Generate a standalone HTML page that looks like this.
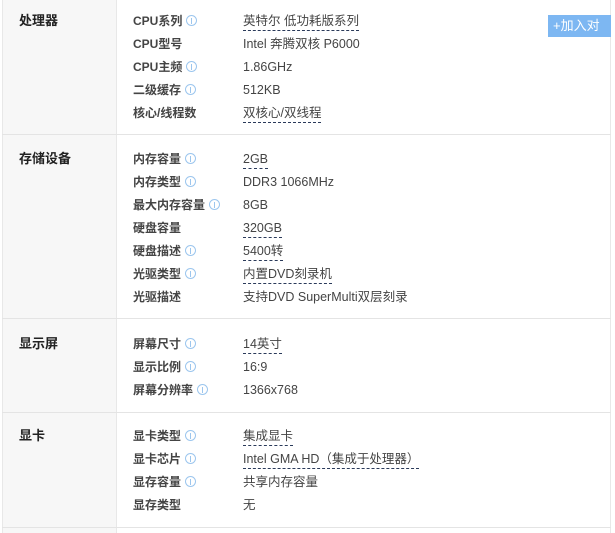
<!DOCTYPE html>
<html><head><meta charset="utf-8"><style>
*{margin:0;padding:0;box-sizing:border-box}
body{width:615px;height:533px;background:#fff;position:relative;overflow:hidden;font-family:"Liberation Sans","Noto Sans CJK SC",sans-serif;font-size:12px;color:#333}
.left{position:absolute;left:2px;top:0;width:115px;height:533px;background:#f7f7f7;border-left:1px solid #e8e8e8;border-right:1px solid #e8e8e8}
.rb{position:absolute;left:610px;top:0;width:1px;height:533px;background:#e8e8e8}
.hl{position:absolute;left:2px;width:609px;height:1px;background:#e4e4e4}
.h,.l,.v{margin-top:1px}
.h{position:absolute;left:19px;font-weight:bold;font-size:13px;color:#222;line-height:16px}
.l{position:absolute;left:133px;font-weight:bold;color:#444;line-height:16px;white-space:nowrap}
.v{position:absolute;left:243px;color:#444;line-height:16px;white-space:nowrap;font-size:12.5px}
.d{border-bottom:1px dashed #2a3a5a;padding-bottom:2px}
.i{display:inline-block;width:11px;height:11px;border:1px solid #9cc6ee;border-radius:50%;vertical-align:-1px;margin-left:4px;position:relative}
.i:after{content:"";position:absolute;left:4px;top:2px;width:1px;height:6px;background:#9cc6ee}
.btn{position:absolute;left:548px;top:15px;width:63px;height:22px;background:#7db7f2;color:#fff;font-size:13px;line-height:22px;padding-left:5px;white-space:nowrap;overflow:hidden}
</style></head><body>
<div class="left"></div><div class="rb"></div>
<div class="hl" style="top:134px"></div>
<div class="hl" style="top:318px"></div>
<div class="hl" style="top:412px"></div>
<div class="hl" style="top:527px"></div>
<div class="btn">+加入对</div>

<div class="h" style="top:12px">处理器</div>
<div class="l" style="top:12px">CPU系列<span class="i"></span></div><div class="v" style="top:12px"><span class="d">英特尔 低功耗版系列</span></div>
<div class="l" style="top:35px">CPU型号</div><div class="v" style="top:35px">Intel 奔腾双核 P6000</div>
<div class="l" style="top:58px">CPU主频<span class="i"></span></div><div class="v" style="top:58px">1.86GHz</div>
<div class="l" style="top:81px">二级缓存<span class="i"></span></div><div class="v" style="top:81px">512KB</div>
<div class="l" style="top:104px">核心/线程数</div><div class="v" style="top:104px"><span class="d">双核心/双线程</span></div>

<div class="h" style="top:150px">存储设备</div>
<div class="l" style="top:150px">内存容量<span class="i"></span></div><div class="v" style="top:150px"><span class="d">2GB</span></div>
<div class="l" style="top:173px">内存类型<span class="i"></span></div><div class="v" style="top:173px">DDR3 1066MHz</div>
<div class="l" style="top:196px">最大内存容量<span class="i"></span></div><div class="v" style="top:196px">8GB</div>
<div class="l" style="top:219px">硬盘容量</div><div class="v" style="top:219px"><span class="d">320GB</span></div>
<div class="l" style="top:242px">硬盘描述<span class="i"></span></div><div class="v" style="top:242px"><span class="d">5400转</span></div>
<div class="l" style="top:265px">光驱类型<span class="i"></span></div><div class="v" style="top:265px"><span class="d">内置DVD刻录机</span></div>
<div class="l" style="top:288px">光驱描述</div><div class="v" style="top:288px">支持DVD SuperMulti双层刻录</div>

<div class="h" style="top:335px">显示屏</div>
<div class="l" style="top:335px">屏幕尺寸<span class="i"></span></div><div class="v" style="top:335px"><span class="d">14英寸</span></div>
<div class="l" style="top:358px">显示比例<span class="i"></span></div><div class="v" style="top:358px">16:9</div>
<div class="l" style="top:381px">屏幕分辨率<span class="i"></span></div><div class="v" style="top:381px">1366x768</div>

<div class="h" style="top:427px">显卡</div>
<div class="l" style="top:427px">显卡类型<span class="i"></span></div><div class="v" style="top:427px"><span class="d">集成显卡</span></div>
<div class="l" style="top:450px">显卡芯片<span class="i"></span></div><div class="v" style="top:450px"><span class="d">Intel GMA HD（集成于处理器）</span></div>
<div class="l" style="top:473px">显存容量<span class="i"></span></div><div class="v" style="top:473px">共享内存容量</div>
<div class="l" style="top:496px">显存类型</div><div class="v" style="top:496px">无</div>
</body></html>
